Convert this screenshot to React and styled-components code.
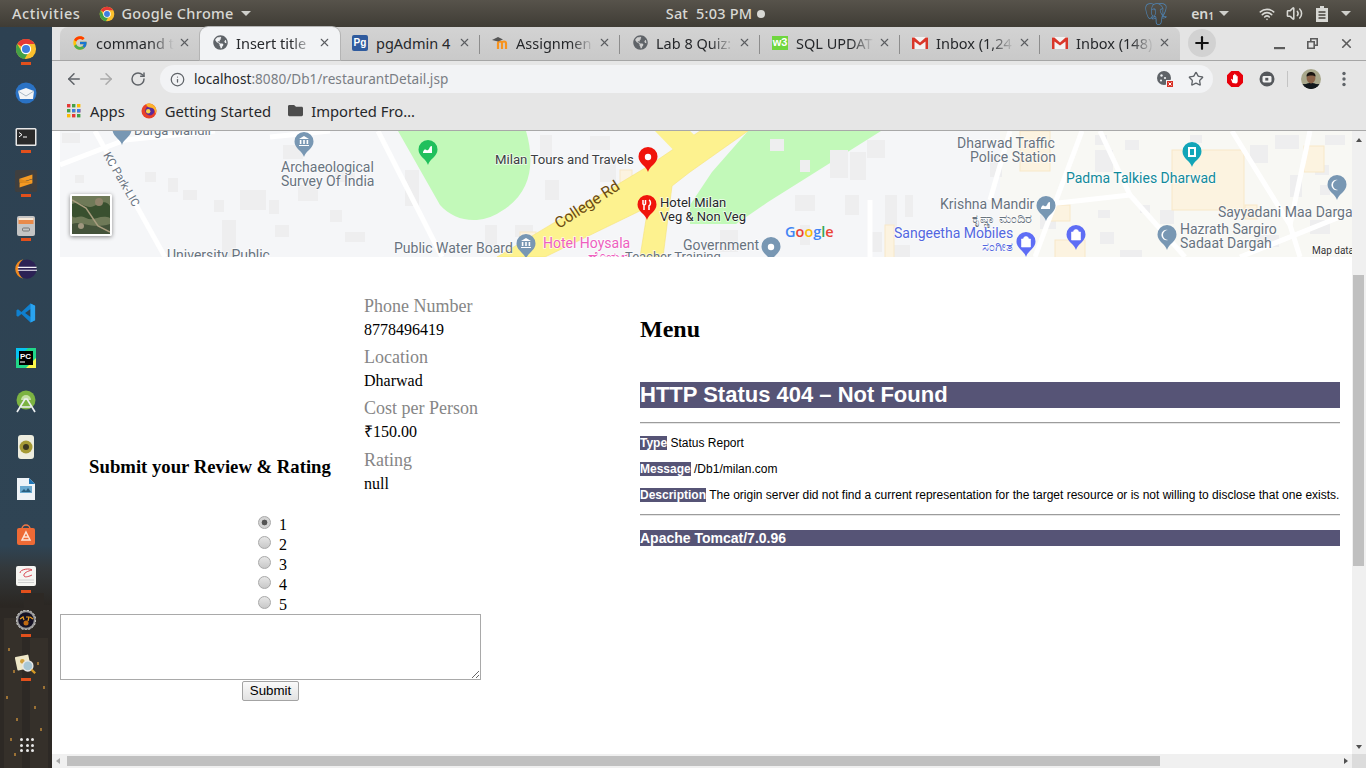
import * as React from 'react';
import styled, { createGlobalStyle } from 'styled-components';
import { ArrowLeft, ArrowRight, RotateCw, Info, Star, X, Plus, Volume2, Wifi } from 'lucide-react';
import { FcGoogle } from 'react-icons/fc';
import { FaGlobeAmericas, FaFolder } from 'react-icons/fa';
import { SiPostgresql } from 'react-icons/si';

const UI_FONT = `"Noto Sans", "Open Sans", sans-serif`;
const SERIF = `"Liberation Serif", "Times New Roman", serif`;
const SANS = `"Liberation Sans", Arial, sans-serif`;

const Global = createGlobalStyle`
  html, body { margin: 0; padding: 0; height: 100%; overflow: hidden; background: #fff; }
  #root { height: 768px; }
`;

const Screen = styled.div`
  width: 1366px;
  height: 768px;
  display: flex;
  flex-direction: column;
  overflow: hidden;
`;

const Spaced = styled.span`
  display: flex;
  margin-left: ${p => p.$left}px;
`;

/* gnome top bar */
const TopBar = styled.div`
  height: 27px;
  flex: none;
  display: flex;
  align-items: center;
  background: linear-gradient(#57534b, #3f3c35);
  color: #d8d8d4;
  font: 500 14.5px/27px ${UI_FONT};
`;
const Activities = styled.span`
  margin-left: 12px;
  letter-spacing: 0.6px;
`;
const AppMenu = styled.div`
  margin-left: 19px;
  display: flex;
  align-items: center;
  gap: 6px;
  letter-spacing: 0.3px;
`;
const Caret = styled.i`
  display: block;
  width: 0;
  height: 0;
  margin-left: ${p => p.$gap || 0}px;
  border-left: 5px solid transparent;
  border-right: 5px solid transparent;
  border-top: 5px solid #cfcfcb;
`;
const Clock = styled.div`
  margin-left: 415px;
  display: flex;
  align-items: center;
  gap: 5px;
  width: 100px;
  white-space: pre;
  letter-spacing: 0.2px;
`;
const Dot = styled.i`
  display: block;
  width: 8px;
  height: 8px;
  border-radius: 50%;
  background: #d8d8d4;
`;
const Tray = styled.div`
  margin-left: auto;
  display: flex;
  align-items: center;
  padding-right: 15px;
`;
const Lang = styled.span`
  margin-left: 24px;
  font-weight: 600;
  font-size: 14px;
  sub { font-size: 10px; vertical-align: -1px; line-height: 0; }
`;

const Body = styled.div`
  flex: 1;
  display: flex;
  min-height: 0;
`;

/* launcher */
const Dock = styled.div`
  position: relative;
  width: 52px;
  flex: none;
  display: flex;
  flex-direction: column;
  overflow: hidden;
  background: linear-gradient(#2d4152 0, #2f4454 70%, #33393c 73%, #2b2723 78%, #1f1b19 100%);
`;
const DockItem = styled.div`
  position: relative;
  z-index: 1;
  height: 44px;
  flex: none;
  display: flex;
  justify-content: center;
  padding-top: 11px;
  box-sizing: border-box;
`;
const RunMark = styled.i`
  position: absolute;
  left: 21px;
  top: 35px;
  width: 10px;
  height: 3px;
  background: #e2501c;
`;
const Wallpaper = styled.svg`
  position: absolute;
  left: 0;
  bottom: 0;
`;
const GridDots = styled.div`
  position: relative;
  z-index: 1;
  margin: auto 0 16px 20px;
  display: grid;
  grid-template-columns: repeat(3, 3px);
  gap: 2.5px;
  i { display: block; width: 3px; height: 3px; border-radius: 50%; background: #e8e8e8; }
`;

/* browser window */
const Browser = styled.div`
  flex: 1;
  min-width: 0;
  display: flex;
  flex-direction: column;
`;
const TabStrip = styled.div`
  height: 33px;
  flex: none;
  display: flex;
  align-items: stretch;
  padding-left: 8px;
  background: #e4e4e4;
`;
const Tabs = styled.div`
  display: flex;
  border-radius: 8px 8px 0 0;
  background: linear-gradient(#d3d3d3, #c9c9c9);
`;
const Tab = styled.div`
  position: relative;
  width: 140px;
  box-sizing: border-box;
  display: flex;
  align-items: center;
  padding: 0 0 2px 12px;
  gap: 8px;
  color: #26282b;
  font: 14.5px ${UI_FONT};
  border-radius: 8px 8px 0 0;
  background: ${p => (p.$active ? '#f2f3f5' : 'transparent')};
  box-shadow: ${p => (p.$active ? '0 0 0 1px #b4b4b4' : 'none')};
  z-index: ${p => (p.$active ? 1 : 0)};
  &::after {
    content: '';
    display: ${p => (p.$sep ? 'block' : 'none')};
    position: absolute;
    right: 0;
    top: 8px;
    height: 19px;
    width: 1px;
    background: #8d8d8d;
  }
`;
const FavSlot = styled.span`
  width: 16px;
  height: 16px;
  flex: none;
  display: flex;
  align-items: center;
  justify-content: center;
`;
const TabTitle = styled.span`
  width: 78px;
  flex: none;
  overflow: hidden;
  white-space: nowrap;
  ${p => !p.$fits && `
    -webkit-mask-image: linear-gradient(90deg, #000 70%, transparent 100%);
    mask-image: linear-gradient(90deg, #000 70%, transparent 100%);
  `}
`;
const TabClose = styled.span`
  display: flex;
  margin-left: -4px;
  color: #5a5c60;
`;
const PgBadge = styled.span`
  width: 16px;
  height: 16px;
  border-radius: 2px;
  background: #2f5b9e;
  color: #fff;
  font: 700 10px/16px ${SANS};
  text-align: center;
`;
const W3Badge = styled.span`
  width: 16px;
  height: 14px;
  background: #6fd63e;
  color: #fff;
  font: 700 11px/13px ${SANS};
  text-align: center;
`;
const NewTab = styled.div`
  width: 28px;
  height: 28px;
  margin: 2px 0 0 8px;
  border-radius: 50%;
  background: #d2d2d2;
  color: #111;
  display: flex;
  align-items: center;
  justify-content: center;
`;
const WindowButtons = styled.div`
  margin-left: auto;
  display: flex;
  align-items: center;
  gap: 20px;
  padding-right: 12px;
  color: #5c5c5c;
`;
const Toolbar = styled.div`
  height: 33px;
  flex: none;
  box-sizing: border-box;
  display: flex;
  align-items: flex-start;
  padding-top: 4px;
  background: #e6e6e6;
  border-top: 1px solid #a6a6a6;
  color: #5f6368;
`;
const NavButton = styled.span`
  width: 32px;
  height: 28px;
  display: flex;
  align-items: center;
  justify-content: center;
  color: ${p => (p.$dim ? '#ababab' : '#5f6368')};
`;
const NavGroup = styled.div`
  display: flex;
  padding-left: 6px;
`;
const Omnibox = styled.div`
  width: 1053px;
  height: 28px;
  margin-left: 6px;
  border-radius: 14px;
  background: #f2f3f5;
  display: flex;
  align-items: center;
  padding: 0 6px 0 10px;
  box-sizing: border-box;
  font: 13.6px ${UI_FONT};
  color: #7a7e84;
`;
const Host = styled.span`
  margin: 0 0 2px 9px;
  b { font-weight: 400; color: #26282b; }
`;
const OmniEnd = styled.div`
  margin-left: auto;
  display: flex;
  align-items: center;
  gap: 14px;
  padding-right: 3px;
`;
const Extensions = styled.div`
  display: flex;
  align-items: center;
  height: 28px;
  padding-left: 13px;
`;
const ToolSep = styled.i`
  display: block;
  width: 1px;
  height: 16px;
  margin: 0 13px 0 12px;
  background: #c4c4c4;
`;
const Bookmarks = styled.div`
  height: 38px;
  flex: none;
  box-sizing: border-box;
  display: flex;
  align-items: center;
  padding: 0 0 2px 15px;
  background: #e6e6e6;
  border-bottom: 1px solid #a8a8a8;
  color: #26282b;
  font: 14.8px ${UI_FONT};
`;
const Bookmark = styled.span`
  display: flex;
  align-items: center;
  gap: ${p => p.$gap}px;
  margin-right: ${p => p.$after}px;
`;

/* page viewport with its scrollbars */
const Viewport = styled.div`
  flex: 1;
  min-height: 0;
  display: grid;
  grid-template-columns: 1300px 14px;
  grid-template-rows: 623px 14px;
`;
const Page = styled.div`
  overflow: hidden;
  background: #fff;
  padding-left: 8px;
  color: #000;
  font: 16px ${SERIF};
`;
const MapBox = styled.div`
  position: relative;
  height: 126px;
  overflow: hidden;
  svg { display: block; }
`;
const SatelliteToggle = styled.div`
  position: absolute;
  left: 10px;
  top: 63px;
  width: 42px;
  height: 42px;
  box-sizing: border-box;
  border: 2px solid #fff;
  border-radius: 2px;
  box-shadow: 0 1px 4px rgba(0, 0, 0, 0.45);
  overflow: hidden;
`;
const MapLabel = styled.text`
  font: ${p => p.$size || 13}px Roboto, "Noto Sans", sans-serif;
  fill: ${p => p.$fill || '#68737f'};
  paint-order: stroke;
  stroke: rgba(255, 255, 255, 0.75);
  stroke-width: 1.5px;
`;
const Columns = styled.div`
  display: grid;
  grid-template-columns: 580px 700px;
`;
const LeftArea = styled.div`
  display: flex;
  flex-direction: column;
`;
const Details = styled.div`
  display: grid;
  grid-template-columns: 300px 216px;
  column-gap: 4px;
`;
const ReviewTitle = styled.h3`
  margin: 0 0 21px;
  align-self: end;
  font: 700 18.72px/22px ${SERIF};
  text-align: center;
`;
const InfoColumn = styled.div`
  padding-top: 37px;
`;
const InfoLabel = styled.div`
  font-size: 18px;
  line-height: 24px;
  color: #868686;
`;
const InfoValue = styled.div`
  font-size: 16px;
  line-height: 22px;
  padding-top: 1px;
  margin-bottom: 4.2px;
`;
const ReviewForm = styled.form`
  width: 421px;
  margin: 0;
  padding-top: 15px;
  text-align: center;
`;
const RatingRow = styled.label`
  display: flex;
  justify-content: center;
  align-items: center;
  height: 20px;
  box-sizing: border-box;
  padding: 2px 0 0 4px;
`;
const Radio = styled.input`
  appearance: none;
  -webkit-appearance: none;
  width: 13px;
  height: 13px;
  margin: 0 8px 0 0;
  border-radius: 50%;
  border: 1px solid #a8a8a8;
  box-sizing: border-box;
  background: linear-gradient(#e6e6e6, #c8c8c8);
  transform: translateY(-2px);
  &:checked {
    background: radial-gradient(circle, #555 0 2.6px, #d4d4d4 3.2px);
  }
`;
const Comment = styled.textarea`
  display: block;
  width: 421px;
  height: 66px;
  margin: 0;
  box-sizing: border-box;
  border: 1px solid #a9a9a9;
  border-radius: 0;
  padding: 2px;
  background: #fff;
  outline: none;
`;
const SubmitButton = styled.button`
  display: block;
  width: 57px;
  height: 20px;
  margin: 1px auto 0;
  padding: 0;
  box-sizing: border-box;
  border: 1px solid #a3a3a3;
  border-radius: 2px;
  background: linear-gradient(#fafafa, #e2e2e2);
  color: #000;
  font: 13.33px ${SANS};
`;
const MenuArea = styled.div`
  padding-top: 58px;
`;
const MenuTitle = styled.h2`
  margin: 0 0 39px;
  font: 700 24px/28px ${SERIF};
`;
const ErrorTitle = styled.h1`
  margin: 0;
  background: #565476;
  color: #fff;
  font: 700 22px/26px ${SANS};
`;
const Rule = styled.hr`
  height: 2px;
  box-sizing: border-box;
  margin: ${p => p.$top}px 0 ${p => p.$bottom}px;
  border: 0;
  border-top: 1px solid #9c9c9c;
  border-bottom: 1px solid #e6e6e6;
`;
const ErrorLine = styled.p`
  margin: 0 0 12px;
  font: 12px/14px ${SANS};
  white-space: nowrap;
  &:last-of-type { margin-bottom: 0; }
  b { background: #565476; color: #fff; }
`;
const ServerLine = styled.h3`
  margin: 0;
  background: #565476;
  color: #fff;
  font: 700 14px/16px ${SANS};
`;
const ScrollTrack = styled.div`
  background: #f0f0f0;
  display: flex;
  flex-direction: ${p => (p.$horizontal ? 'row' : 'column')};
  align-items: ${p => (p.$horizontal ? 'center' : 'stretch')};
  box-sizing: border-box;
`;
const VThumb = styled.div`
  height: 291px;
  margin: 133px 2px 0 1px;
  background: #c0c0c0;
`;
const HThumb = styled.div`
  width: 1093px;
  height: 10px;
  margin-left: 7px;
  background: #c0c0c0;
`;
const Arrow = styled.i`
  display: block;
  width: 0;
  height: 0;
  ${p => p.$dir === 'up' && `margin: 7px auto 0; border: 3.5px solid transparent; border-top: 0; border-bottom: 4px solid #505050;`}
  ${p => p.$dir === 'down' && `margin: auto auto 5px; border: 3.5px solid transparent; border-bottom: 0; border-top: 4px solid #505050;`}
  ${p => p.$dir === 'left' && `margin-left: 4px; border: 3.5px solid transparent; border-left: 0; border-right: 4px solid #a8a8a8;`}
  ${p => p.$dir === 'right' && `margin: 0 4px 0 auto; border: 3.5px solid transparent; border-right: 0; border-left: 4px solid #505050;`}
`;
const Corner = styled.div`
  background: #dcdcdc;
`;

/* ---- logos ---- */
const ChromeLogo = ({ size }) => (
  <svg width={size} height={size} viewBox="0 0 24 24">
    <circle cx="12" cy="12" r="11" fill="#fbc02d" />
    <path d="M2.5 6.5A11 11 0 0 1 21.5 6.5H12A5.5 5.5 0 0 0 7.2 9.2Z" fill="#e53935" />
    <path d="M2.5 6.5A11 11 0 0 0 10.4 22.9L15 15A5.5 5.5 0 0 1 7.2 14.8Z" fill="#43a047" />
    <circle cx="12" cy="12" r="5.6" fill="#fff" />
    <circle cx="12" cy="12" r="4.4" fill="#3f7fe0" />
  </svg>
);

const GmailLogo = () => (
  <svg width="16" height="14" viewBox="0 0 16 14">
    <rect y="1" width="16" height="12" fill="#f3f3f3" />
    <path d="M0 13V1.5h2.4L8 6.4l5.6-4.9H16V13h-2.5V5.4L8 9.6 2.5 5.4V13Z" fill="#d9372a" />
  </svg>
);

const MoodleLogo = () => (
  <svg width="16" height="14" viewBox="0 0 16 14">
    <path d="M4 13V7.5a2 2 0 0 1 4 0V13M8 7.5a2 2 0 0 1 4 0V13" transform="translate(2 0)" fill="none" stroke="#f7931e" strokeWidth="2.2" />
    <path d="M0 4 6 1l5 2.4-5 2.2Z" fill="#555" />
  </svg>
);

const FirefoxLogo = () => (
  <svg width="16" height="16" viewBox="0 0 16 16">
    <circle cx="8" cy="8" r="7.5" fill="#e8412a" />
    <circle cx="8.8" cy="7.8" r="4.6" fill="#5b2a9a" />
    <path d="M5 1.2A7.5 7.5 0 0 1 15.4 7c.2 2-.4 3-1 4 .1-3.5-2-6.5-5.5-6.5C7 4.5 5.8 3 5 1.2Z" fill="#fdb32b" />
    <circle cx="7.2" cy="8.2" r="2.2" fill="#f7d34a" />
  </svg>
);

const AppsGrid = () => (
  <svg width="14" height="14" viewBox="0 0 14 14">
    {[0, 5, 10].flatMap(y => [0, 5, 10].map(x => (
      <rect key={`${x}-${y}`} x={x} y={y} width="3.4" height="3.4"
        fill={{ 0: '#e53935', 5: '#43a047', 10: '#fbbc05' }[(x + y) % 15]} />
    )))}
    <rect x="5" y="5" width="3.4" height="3.4" fill="#3f7fe0" />
    <rect x="10" y="5" width="3.4" height="3.4" fill="#3f7fe0" />
  </svg>
);

const CookieBlocked = () => (
  <svg width="18" height="18" viewBox="0 0 18 18">
    <circle cx="8" cy="8" r="7" fill="#5f6368" />
    <circle cx="5.5" cy="5.5" r="1.2" fill="#f2f3f5" />
    <circle cx="9" cy="8" r="1.1" fill="#f2f3f5" />
    <circle cx="5" cy="10.5" r="1.1" fill="#f2f3f5" />
    <rect x="10.5" y="10.5" width="7" height="7" fill="#d93025" stroke="#f2f3f5" />
    <path d="M12.5 12.5l3 3m0-3l-3 3" stroke="#fff" strokeWidth="1" />
  </svg>
);

const AdBlockLogo = () => (
  <svg width="18" height="18" viewBox="0 0 18 18">
    <path d="M5.3 1h7.4L17 5.3v7.4L12.7 17H5.3L1 12.7V5.3Z" fill="#e8000b" />
    <path d="M6.5 13 5 9.2l1-.4 1 1.5V5.5a.6.6 0 0 1 1.2 0V4.4a.6.6 0 0 1 1.2 0v1a.6.6 0 0 1 1.2 0v1a.6.6 0 0 1 1.1.1V11c0 1.5-.7 2.4-1.7 2.4Z" fill="#fff" />
  </svg>
);

const CastLogo = () => (
  <svg width="16" height="16" viewBox="0 0 16 16">
    <circle cx="8" cy="8" r="7.5" fill="#55585c" />
    <rect x="3.5" y="5" width="9" height="6.5" rx="1.4" fill="#f2f2f2" />
    <rect x="6.3" y="6.8" width="3" height="2.8" fill="#55585c" />
  </svg>
);

const Avatar = () => (
  <svg width="20" height="20" viewBox="0 0 20 20">
    <defs><clipPath id="av"><circle cx="10" cy="10" r="10" /></clipPath></defs>
    <g clipPath="url(#av)">
      <rect width="20" height="20" fill="#a9a88c" />
      <rect y="15" width="20" height="5" fill="#1d2326" />
      <path d="M2 20c1-5 4-6 8-6s7 1 8 6Z" fill="#12181c" />
      <ellipse cx="10" cy="9" rx="4.4" ry="5.4" fill="#8a6248" />
      <path d="M5.5 7.5C5.5 4 8 3 10 3s4.6 1 4.6 4.5C13 6 8 6 5.5 7.5Z" fill="#1b1512" />
    </g>
  </svg>
);

const ThreeDots = () => (
  <svg width="6" height="16" viewBox="0 0 6 16">
    <circle cx="3" cy="2.5" r="1.7" fill="#5f6368" />
    <circle cx="3" cy="8" r="1.7" fill="#5f6368" />
    <circle cx="3" cy="13.5" r="1.7" fill="#5f6368" />
  </svg>
);

const BatteryIcon = () => (
  <svg width="12" height="16" viewBox="0 0 12 16">
    <path d="M4 0h4v2h4v14H0V2h4Z" fill="#d8d8d4" />
    <path d="M2.5 6h7M2.5 9h7M2.5 12h7" stroke="#45423b" strokeWidth="1.3" />
  </svg>
);

/* launcher icons */
const DockTerminal = () => (
  <svg width="22" height="24" viewBox="0 0 22 24">
    <rect x="0.5" y="2" width="21" height="18" rx="1.5" fill="#e8e8e8" />
    <rect x="2" y="3.5" width="18" height="15" fill="#2a2a2a" />
    <path d="M4 6.5l3 2.2-3 2.2" fill="none" stroke="#fff" strokeWidth="1" />
    <path d="M8 11h4" stroke="#fff" />
  </svg>
);
const DockSublime = () => (
  <svg width="22" height="22" viewBox="0 0 24 24">
    <rect width="24" height="24" rx="2" fill="#3f3f3f" />
    <path d="M5 9.5 19 5v4.5L5 14Zm0 5 14-4.5V14.5L5 19Z" fill="#f59a23" />
    <path d="M5 9.5 19 14.5v-.1L5 14Z" fill="#e08a1b" />
  </svg>
);
const DockFiles = () => (
  <svg width="20" height="24" viewBox="0 0 20 24">
    <rect x="1" y="2" width="18" height="20" rx="2" fill="#c4c4c4" />
    <rect x="2.5" y="4" width="15" height="6" fill="#e98a4a" />
    <rect x="2.5" y="4" width="15" height="2" fill="#f7e9d8" />
    <rect x="6.5" y="14" width="7" height="3" rx="1" fill="none" stroke="#777" />
  </svg>
);
const DockEclipse = () => (
  <svg width="22" height="22" viewBox="0 0 24 24">
    <circle cx="13" cy="12" r="10.5" fill="#2c2255" />
    <path d="M9 1.4A10.8 10.8 0 0 0 9 22.6 13 13 0 0 1 9 1.4Z" fill="#f28a1e" />
    <path d="M3 9.5h20.5v1.3H3Zm0 3.2h21v1.3H3Z" fill="#f4f2fa" />
  </svg>
);
const DockVsCode = () => (
  <svg width="20" height="22" viewBox="0 0 22 24">
    <path d="M16 1.5 21 4v16l-5 2.5L6 13l-3.8 3L.5 15V9l1.7-1L6 11ZM16 7.5 10 12l6 4.5Z" fill="#0f80cf" />
    <path d="M16 1.5 21 4v16l-5 2.5Z" fill="#2aa3ef" />
  </svg>
);
const DockPyCharm = () => (
  <svg width="22" height="24" viewBox="0 0 22 24">
    <rect x="1" y="2" width="20" height="20" fill="#21d789" />
    <path d="M1 2h12L1 14Z" fill="#07c3f2" />
    <path d="M21 12v10H11Z" fill="#fcf84a" />
    <rect x="4" y="5" width="14" height="14" fill="#000" />
    <text x="5" y="13" fill="#fff" fontFamily="Liberation Sans" fontWeight="700" fontSize="8">PC</text>
    <rect x="5" y="15.5" width="5" height="1" fill="#fff" />
  </svg>
);
const DockAndroid = () => (
  <svg width="24" height="24" viewBox="0 0 24 24">
    <circle cx="12" cy="10" r="9.5" fill="#7cb342" />
    <path d="M7 10a5 5 0 0 1 10 0Z" fill="#c5e1a5" />
    <path d="M3 22 11 9h2l8 13M7 17h10" fill="none" stroke="#eceff1" strokeWidth="1.7" />
  </svg>
);
const DockSpeaker = () => (
  <svg width="22" height="26" viewBox="0 0 22 26">
    <rect x="3" y="1" width="16" height="24" rx="3" fill="#ededdf" />
    <circle cx="11" cy="13" r="6.5" fill="#a59a35" />
    <circle cx="11" cy="13" r="3" fill="#3b3820" />
  </svg>
);
const DockImpress = () => (
  <svg width="18" height="22" viewBox="0 0 18 22">
    <path d="M0 0h12l6 6v16H0Z" fill="#eef3f7" />
    <path d="M12 0l6 6h-6Z" fill="#1f75b5" />
    <rect x="3" y="8" width="12" height="7" fill="#6aa9cf" />
    <path d="M4 14l3-3 2 2 2-3 3 4Z" fill="#2a5f7f" />
  </svg>
);
const DockSoftware = () => (
  <svg width="20" height="24" viewBox="0 0 20 24">
    <path d="M6 7a4 4 0 0 1 8 0" fill="none" stroke="#f07746" strokeWidth="1.5" />
    <rect x="1" y="6" width="18" height="17" rx="2" fill="#ee6a35" />
    <path d="M10 10l4 8h-8Zm-2.5 5h5" fill="none" stroke="#fde3d6" strokeWidth="1.5" />
  </svg>
);
const DockPaper = () => (
  <svg width="20" height="20" viewBox="0 0 20 20">
    <rect width="20" height="20" rx="2" fill="#f5f5f2" />
    <path d="M4 7c0-4 10-5 12-3M16 4c-4 1-9 3-8 6 1 2 6 0 8-1" fill="none" stroke="#d9434e" />
    <path d="M2 14h16M2 16.5h16" stroke="#d0d0d0" />
  </svg>
);
const DockGear = () => (
  <svg width="20" height="20" viewBox="0 0 20 20">
    <circle cx="10" cy="10" r="9.8" fill="#9a9a9a" stroke="#ddd" strokeDasharray="2 1.6" />
    <circle cx="10" cy="10" r="7.8" fill="#151225" />
    <path d="M4 9l3-2 1 3m2-3 3 0-1 4m2-4 3 2" fill="none" stroke="#f0a020" strokeWidth="1.2" />
    <circle cx="10" cy="13" r="2.5" fill="#c06a12" />
  </svg>
);
const DockMagnifier = () => (
  <svg width="22" height="22" viewBox="0 0 24 24">
    <rect x="1" y="2" width="15" height="15" rx="1" fill="#eee7c8" transform="rotate(-12 8 9)" />
    <circle cx="8" cy="8" r="2.5" fill="#d2a03c" />
    <circle cx="14" cy="13" r="5.5" fill="#a9c7d4" stroke="#e8e8e8" strokeWidth="1.5" />
    <path d="M18 17l4 4" stroke="#d59a26" strokeWidth="2.5" />
  </svg>
);

const dockApps = [
  { icon: <ChromeLogo size={22} />, running: true },
  { icon: <svg width="22" height="22" viewBox="0 0 22 22"><circle cx="11" cy="11" r="10.5" fill="#2a72c4" /><path d="M3 9l8-3 8 3-1 8H5Z" fill="#f2f4f6" /><path d="M3 9l8 5 8-5" fill="none" stroke="#a9b8c4" /></svg> },
  { icon: <DockTerminal />, running: true },
  { icon: <DockSublime />, running: true },
  { icon: <DockFiles />, running: true },
  { icon: <DockEclipse /> },
  { icon: <DockVsCode /> },
  { icon: <DockPyCharm /> },
  { icon: <DockAndroid /> },
  { icon: <DockSpeaker /> },
  { icon: <DockImpress /> },
  { icon: <DockSoftware /> },
  { icon: <DockPaper />, running: true },
  { icon: <DockGear />, running: true },
  { icon: <DockMagnifier />, running: true },
];

const tabs = [
  { title: 'command to', fav: <FcGoogle size={16} /> },
  { title: 'Insert title', fav: <FaGlobeAmericas size={15} color="#5f6368" />, active: true },
  { title: 'pgAdmin 4', fav: <PgBadge>Pg</PgBadge>, sep: true, fits: true },
  { title: 'Assignmen', fav: <MoodleLogo />, sep: true },
  { title: 'Lab 8 Quiz:', fav: <FaGlobeAmericas size={15} color="#5f6368" />, sep: true },
  { title: 'SQL UPDAT', fav: <W3Badge>w3</W3Badge>, sep: true },
  { title: 'Inbox (1,24', fav: <GmailLogo />, sep: true },
  { title: 'Inbox (148)', fav: <GmailLogo /> },
];

/* ---- map, in screen coordinates (viewBox starts at the map's corner) ---- */
const greyBlocks = [
  [62, 133, 18, 10], [75, 175, 9, 8], [145, 172, 11, 10], [168, 178, 10, 14], [183, 190, 14, 10],
  [240, 190, 26, 20], [269, 200, 10, 14], [298, 185, 20, 16], [222, 220, 14, 40], [275, 225, 14, 12],
  [214, 200, 10, 12], [330, 210, 12, 12], [345, 232, 20, 10], [335, 170, 20, 12], [283, 145, 20, 14],
  [405, 170, 14, 36], [540, 135, 12, 24], [485, 225, 12, 20], [515, 225, 18, 12], [545, 180, 14, 20],
  [590, 136, 20, 14], [600, 160, 16, 22], [770, 139, 14, 12], [800, 160, 10, 12], [830, 150, 18, 28],
  [850, 152, 16, 28], [867, 140, 18, 18], [795, 195, 20, 16], [720, 230, 18, 22], [800, 225, 10, 20],
  [845, 195, 14, 20], [885, 195, 12, 34], [905, 195, 8, 22], [868, 232, 14, 20], [890, 245, 20, 12],
  [990, 155, 12, 22], [1040, 215, 16, 14], [1095, 150, 18, 22], [1125, 140, 14, 10], [1098, 210, 12, 8],
  [1100, 232, 14, 12], [1140, 205, 10, 8], [1160, 210, 14, 14], [1120, 250, 22, 8], [1250, 145, 18, 18],
  [1290, 175, 12, 22], [1315, 165, 14, 10], [1320, 185, 10, 10], [1325, 135, 20, 10], [1275, 135, 24, 14],
  [1190, 135, 12, 8], [1255, 235, 24, 12], [1095, 135, 12, 10], [1310, 220, 20, 14],
];
const tanBlocks = [
  [1172, 150, 72, 60], [1304, 146, 20, 26], [1245, 205, 12, 14], [1050, 205, 20, 16], [1055, 240, 30, 18],
  [1020, 131, 30, 40], [885, 225, 9, 34], [620, 170, 12, 16], [520, 232, 16, 12],
];
const mapRoads = [
  'M60 165L125 140L215 131', 'M95 131L165 257', 'M378 131L442 257', 'M270 137L330 131',
  'M1010 131L990 200', 'M1082 131L1035 257', 'M1100 131L1130 195L1185 257', 'M1232 131L1290 225L1300 257',
  'M1310 131L1290 225', 'M1352 212L1240 257', 'M870 200V257', 'M1130 195L1040 205',
];
const mapTexts = [
  { x: 134, y: 135, t: 'Durga Mandir', size: 13 },
  { x: 281, y: 172, t: 'Archaeological', size: 14 },
  { x: 281, y: 186, t: 'Survey Of India', size: 14 },
  { x: 167, y: 260, t: 'University Public', size: 14 },
  { x: 495, y: 164, t: 'Milan Tours and Travels', size: 13.2, fill: '#3c4043' },
  { x: 660, y: 207, t: 'Hotel Milan', size: 13, fill: '#26282b' },
  { x: 660, y: 221, t: 'Veg & Non Veg', size: 13, fill: '#26282b' },
  { x: 394, y: 253, t: 'Public Water Board', size: 14 },
  { x: 543, y: 248, t: 'Hotel Hoysala', size: 14, fill: '#ee5fbf' },
  { x: 588, y: 261, t: 'ಹೊಯ್ಸಳ', size: 13, fill: '#ee5fbf' },
  { x: 683, y: 250, t: 'Government', size: 14 },
  { x: 625, y: 261, t: 'Teacher Training', size: 13 },
  { x: 957, y: 148, t: 'Dharwad Traffic', size: 14 },
  { x: 970, y: 162, t: 'Police Station', size: 14 },
  { x: 1066, y: 183, t: 'Padma Talkies Dharwad', size: 14, fill: '#118a9b' },
  { x: 940, y: 209, t: 'Krishna Mandir', size: 14 },
  { x: 972, y: 223, t: 'ಕೃಷ್ಣಾ ಮಂದಿರ', size: 13 },
  { x: 1218, y: 217, t: 'Sayyadani Maa Darga', size: 14 },
  { x: 894, y: 238, t: 'Sangeetha Mobiles', size: 14, fill: '#5367e0' },
  { x: 982, y: 251, t: 'ಸಂಗೀತ', size: 13, fill: '#5367e0' },
  { x: 1180, y: 234, t: 'Hazrath Sargiro', size: 14 },
  { x: 1180, y: 248, t: 'Sadaat Dargah', size: 14 },
];
const mapPins = [
  { x: 122, tip: 145, c: '#7897b3', r: 8 },
  { x: 304, tip: 157, c: '#7897b3', mark: 'bank' },
  { x: 428, tip: 165, c: '#20c05c', mark: 'spot' },
  { x: 648, tip: 172, c: '#f0140c', mark: 'dot' },
  { x: 647, tip: 220, c: '#f0140c', mark: 'fork' },
  { x: 526, tip: 259, c: '#7897b3', mark: 'bank' },
  { x: 771, tip: 262, c: '#7897b3', mark: 'dot' },
  { x: 1192, tip: 167, c: '#12a5b8', mark: 'film' },
  { x: 1337, tip: 200, c: '#7897b3', mark: 'moon' },
  { x: 1046, tip: 221, c: '#7897b3', mark: 'spot' },
  { x: 1076, tip: 250, c: '#5e6df5', mark: 'bag' },
  { x: 1026, tip: 257, c: '#5e6df5', mark: 'bag' },
  { x: 1167, tip: 250, c: '#7897b3', mark: 'moon' },
];

const PinMark = ({ mark }) => {
  if (mark === 'bank') return <path d="M-5-18l5-3 5 3Zm.8 1h1.6v4h-1.6Zm3.4 0h1.6v4H-.8Zm3.4 0h1.6v4H2.6ZM-5-12h10v1H-5Z" fill="#fff" />;
  if (mark === 'dot') return <circle cy="-15" r="3.2" fill="#fff" />;
  if (mark === 'fork') return <path d="M-4-20v4l1 1v5M-1.5-20v4l-1 1M2-20c2 1 2 5 0 6v4" fill="none" stroke="#fff" strokeWidth="1.5" />;
  if (mark === 'film') return <path d="M-4-20H4V-10H-4Zm2 2v6h4v-6Z" fill="#fff" fillRule="evenodd" />;
  if (mark === 'moon') return <path d="M1-20a5.2 5.2 0 1 0 0 10 4.2 4.2 0 0 1 0-10Z" fill="#fff" />;
  if (mark === 'bag') return <path d="M-4.5-18H4.5V-10H-4.5Zm2 0a2.5 2.5 0 0 1 5 0" fill="#fff" stroke="#fff" strokeWidth=".6" />;
  if (mark === 'spot') return <path d="M-5-13c2-5 3-1 5-2s1-4 4-4v7h-9Z" fill="#fff" />;
  return null;
};

const MapPin = ({ x, tip, c, mark }) => (
  <g transform={`translate(${x} ${tip})`}>
    <path d="M0 0C-1.5-6-9.5-8.5-9.5-15.5A9.5 9.5 0 1 1 9.5-15.5C9.5-8.5 1.5-6 0 0Z" fill={c} />
    <PinMark mark={mark} />
  </g>
);

const MapDrawing = () => (
  <svg width="1292" height="126" viewBox="60 131 1292 126">
    <rect x="60" y="131" width="1292" height="126" fill="#f5f6f8" />
    <rect x="1000" y="131" width="352" height="126" fill="#f8f8f4" />
    <path d="M398 131H526C536 165 530 195 500 212C480 225 455 222 440 205Z" fill="#c2f9b9" />
    <path d="M748 131H881L768 202L736 224H690L690 205L712 172Z" fill="#c2f9b9" />
    {greyBlocks.map(([x, y, w, h], i) => <rect key={i} x={x} y={y} width={w} height={h} fill="#eeeeef" />)}
    {tanBlocks.map(([x, y, w, h], i) => <rect key={i} x={x} y={y} width={w} height={h} fill="#fcf3e0" stroke="#f8e8c8" />)}
    {mapRoads.map(d => <path key={d} d={d} fill="none" stroke="#fff" strokeWidth="5" />)}
    <path d="M497 257L650 165L700 131H748L690 172L672 186L663 257H640L648 207L545 257Z" fill="#fdf28f" stroke="#f6e27a" strokeWidth="0.6" />
    <path d="M655 131H690L705 145L685 162Z" fill="#fdf28f" />
    <text transform="translate(559 229) rotate(-33)" fontFamily="Roboto" fontSize="15.5" fill="#6b4a10">College Rd</text>
    <text transform="translate(103 155) rotate(60)" fontFamily="Roboto" fontSize="11.5" fill="#68737f">KC Park-LIC</text>
    {mapPins.map(p => <MapPin key={`${p.x}-${p.tip}`} {...p} />)}
    {mapTexts.map(l => <MapLabel key={l.t} x={l.x} y={l.y} $size={l.size} $fill={l.fill}>{l.t}</MapLabel>)}
    <text x="785" y="237" fontFamily="Open Sans" fontWeight="600" fontSize="14.5">
      <tspan fill="#4285f4">G</tspan><tspan fill="#ea4335">o</tspan><tspan fill="#fbbc05">o</tspan>
      <tspan fill="#4285f4">g</tspan><tspan fill="#34a853">l</tspan><tspan fill="#ea4335">e</tspan>
    </text>
    <MapLabel x={1312} y={254} $size={10} $fill="#333">Map data</MapLabel>
  </svg>
);

const SatelliteThumb = () => (
  <svg width="38" height="38" viewBox="0 0 38 38">
    <rect width="38" height="38" fill="#6f7a58" />
    <path d="M0 8C8 4 14 14 22 10S34 4 38 10V22C28 18 22 26 14 22S4 24 0 20Z" fill="#39502f" />
    <path d="M0 28C10 24 18 34 38 28V38H0Z" fill="#44533a" />
    <path d="M0 4 14 12 26 30 38 36" fill="none" stroke="#a99d7f" strokeWidth="1.5" />
    <circle cx="27" cy="6" r="4" fill="#8f836a" />
    <circle cx="9" cy="30" r="3" fill="#a0977f" />
  </svg>
);

export default function App() {
  return (
    <Screen>
      <Global />
      <TopBar>
        <Activities>Activities</Activities>
        <AppMenu>
          <ChromeLogo size={16} />
          Google Chrome
          <Caret $gap={1} />
        </AppMenu>
        <Clock>Sat  5:03 PM<Dot /></Clock>
        <Tray>
          <SiPostgresql size={22} color="#4f86b8" />
          <Lang>en<sub>1</sub></Lang>
          <Caret $gap={5} />
          <Spaced $left={30}><Wifi size={16} strokeWidth={2.4} /></Spaced>
          <Spaced $left={11}><Volume2 size={17} strokeWidth={2.2} /></Spaced>
          <Spaced $left={13}><BatteryIcon /></Spaced>
          <Caret $gap={13} />
        </Tray>
      </TopBar>
      <Body>
        <Dock>
          <Wallpaper width="52" height="190" viewBox="0 0 52 190">
            <path d="M0 30h24V15h20v12h8v163H0Z" fill="#2d2925" />
            <path d="M4 40h18v150H4ZM30 60h18v130H30Z" fill="#3a352f" opacity=".6" />
            {[[8, 70], [13, 92], [6, 118], [16, 140], [37, 84], [43, 108], [34, 128], [10, 160], [40, 150], [14, 175]].map(([x, y]) => (
              <rect key={`${x}-${y}`} x={x} y={y} width="2" height="3" fill="#c98f3a" opacity=".7" />
            ))}
          </Wallpaper>
          {dockApps.map((app, i) => (
            <DockItem key={i}>
              {app.icon}
              {app.running && <RunMark />}
            </DockItem>
          ))}
          <GridDots>{Array.from({ length: 9 }, (_, i) => <i key={i} />)}</GridDots>
        </Dock>
        <Browser>
          <TabStrip>
            <Tabs>
              {tabs.map(tab => (
                <Tab key={tab.title} $active={tab.active} $sep={tab.sep}>
                  <FavSlot>{tab.fav}</FavSlot>
                  <TabTitle $fits={tab.fits}>{tab.title}</TabTitle>
                  <TabClose><X size={13} strokeWidth={2} /></TabClose>
                </Tab>
              ))}
            </Tabs>
            <NewTab><Plus size={20} strokeWidth={2.6} /></NewTab>
            <WindowButtons>
              <svg width="13" height="13" viewBox="0 0 13 13"><rect x="1" y="10" width="11" height="2.2" fill="#5c5c5c" /></svg>
              <svg width="13" height="13" viewBox="0 0 13 13"><path d="M4 1h8v8h-3v3H1V4h3Zm1.6 1.6V4H9v3.4h1.4V2.6ZM2.6 5.6v4.8h4.8V5.6Z" fill="#5c5c5c" fillRule="evenodd" /></svg>
              <X size={15} strokeWidth={2.6} />
            </WindowButtons>
          </TabStrip>
          <Toolbar>
            <NavGroup>
              <NavButton><ArrowLeft size={18} strokeWidth={2} /></NavButton>
              <NavButton $dim><ArrowRight size={18} strokeWidth={2} /></NavButton>
              <NavButton><RotateCw size={16} strokeWidth={2.2} /></NavButton>
            </NavGroup>
            <Omnibox>
              <Info size={15} strokeWidth={2} color="#5f6368" />
              <Host><b>localhost</b>:8080/Db1/restaurantDetail.jsp</Host>
              <OmniEnd>
                <CookieBlocked />
                <Star size={16} strokeWidth={2} color="#5f6368" />
              </OmniEnd>
            </Omnibox>
            <Extensions>
              <AdBlockLogo />
              <Spaced $left={15}><CastLogo /></Spaced>
              <ToolSep />
              <Avatar />
              <Spaced $left={20}><ThreeDots /></Spaced>
            </Extensions>
          </Toolbar>
          <Bookmarks>
            <Bookmark $gap={9} $after={16}><AppsGrid />Apps</Bookmark>
            <Bookmark $gap={8} $after={17}><FirefoxLogo />Getting Started</Bookmark>
            <Bookmark $gap={8} $after={0}><FaFolder size={15} color="#4d4d4d" />Imported Fro…</Bookmark>
          </Bookmarks>
          <Viewport>
            <Page>
              <MapBox>
                <MapDrawing />
                <SatelliteToggle><SatelliteThumb /></SatelliteToggle>
              </MapBox>
              <Columns>
                <LeftArea>
                  <Details>
                    <ReviewTitle>Submit your Review &amp; Rating</ReviewTitle>
                    <InfoColumn>
                      <InfoLabel>Phone Number</InfoLabel>
                      <InfoValue>8778496419</InfoValue>
                      <InfoLabel>Location</InfoLabel>
                      <InfoValue>Dharwad</InfoValue>
                      <InfoLabel>Cost per Person</InfoLabel>
                      <InfoValue>₹150.00</InfoValue>
                      <InfoLabel>Rating</InfoLabel>
                      <InfoValue>null</InfoValue>
                    </InfoColumn>
                  </Details>
                  <ReviewForm onSubmit={e => e.preventDefault()}>
                    {[1, 2, 3, 4, 5].map(n => (
                      <RatingRow key={n}>
                        <Radio type="radio" name="rating" defaultChecked={n === 1} />
                        {n}
                      </RatingRow>
                    ))}
                    <Comment />
                    <SubmitButton type="submit">Submit</SubmitButton>
                  </ReviewForm>
                </LeftArea>
                <MenuArea>
                  <MenuTitle>Menu</MenuTitle>
                  <ErrorTitle>HTTP Status 404 – Not Found</ErrorTitle>
                  <Rule $top={14} $bottom={12} />
                  <ErrorLine><b>Type</b> Status Report</ErrorLine>
                  <ErrorLine><b>Message</b> /Db1/milan.com</ErrorLine>
                  <ErrorLine><b>Description</b> The origin server did not find a current representation for the target resource or is not willing to disclose that one exists.</ErrorLine>
                  <Rule $top={12} $bottom={14} />
                  <ServerLine>Apache Tomcat/7.0.96</ServerLine>
                </MenuArea>
              </Columns>
            </Page>
            <ScrollTrack>
              <Arrow $dir="up" />
              <VThumb />
              <Arrow $dir="down" />
            </ScrollTrack>
            <ScrollTrack $horizontal>
              <Arrow $dir="left" />
              <HThumb />
              <Arrow $dir="right" />
            </ScrollTrack>
            <Corner />
          </Viewport>
        </Browser>
      </Body>
    </Screen>
  );
}
